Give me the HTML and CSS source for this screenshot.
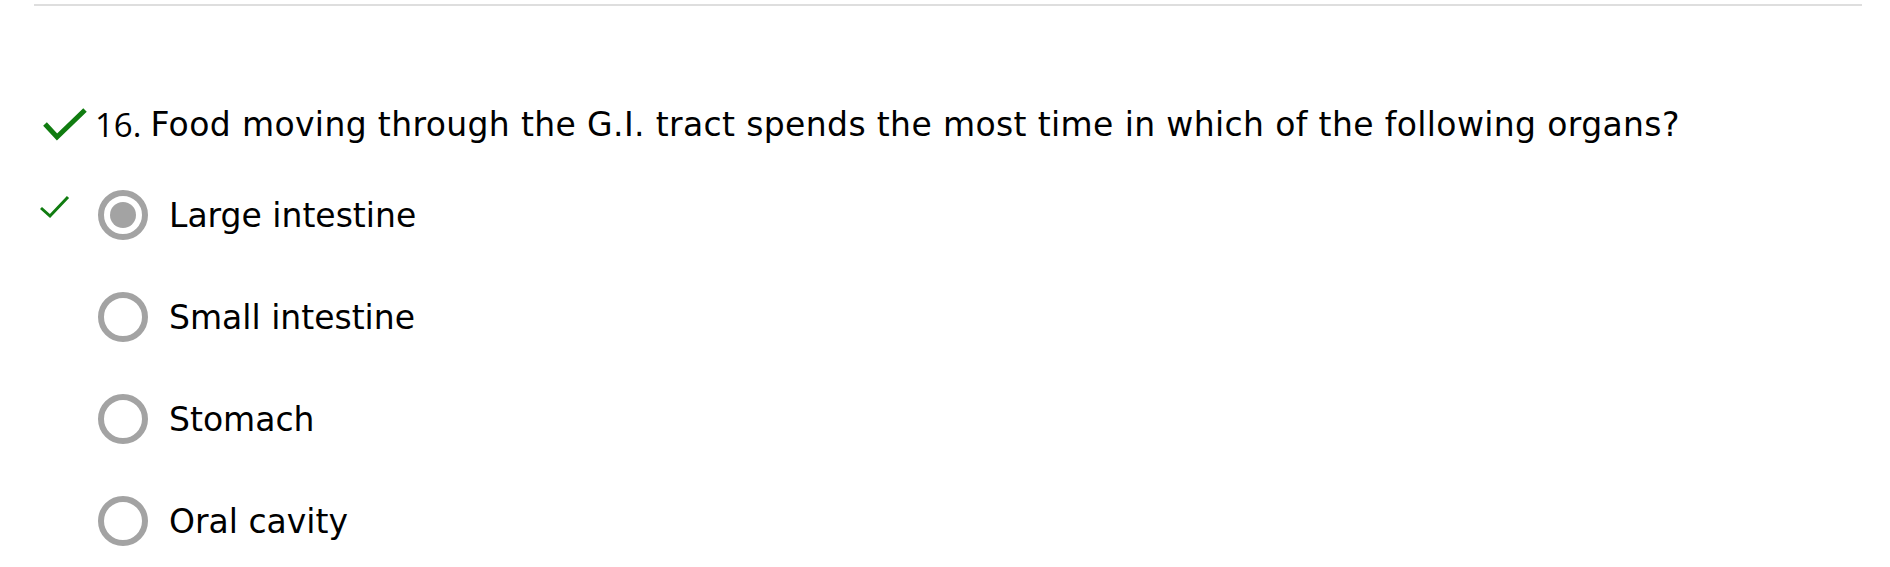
FILE: index.html
```html
<!DOCTYPE html>
<html>
<head>
<meta charset="utf-8">
<link rel="stylesheet" href="styles.css">
</head>
<body>
<div class="page">
  <div class="rule"></div>
  <div class="question">
    <svg class="big-check" width="46" height="34" viewBox="0 0 46 34"><polyline points="3,17 15,30 43,3" fill="none" stroke="#107c10" stroke-width="5"/></svg>
    <span class="num">16.</span>
    <span class="qtext">Food moving through the G.I. tract spends the most time in which of the following organs?</span>
  </div>
  <div class="options">
    <div class="option">
      <span class="mark"><svg width="30" height="24" viewBox="0 0 30 24"><polyline points="1,13 10,21 28,2" fill="none" stroke="#107c10" stroke-width="3"/></svg></span>
      <span class="radio checked"></span>
      <span class="label">Large intestine</span>
    </div>
    <div class="option">
      <span class="mark"></span>
      <span class="radio"></span>
      <span class="label">Small intestine</span>
    </div>
    <div class="option">
      <span class="mark"></span>
      <span class="radio"></span>
      <span class="label">Stomach</span>
    </div>
    <div class="option">
      <span class="mark"></span>
      <span class="radio"></span>
      <span class="label">Oral cavity</span>
    </div>
  </div>
</div>
</body>
</html>
```

FILE: styles.css
```css
html, body {
  margin: 0;
  padding: 0;
  background: #fff;
}
.page {
  padding: 4px 28px 0 34px;
  font-family: "DejaVu Sans", Verdana, sans-serif;
  color: #000;
}
.rule {
  height: 2px;
  background: #dedede;
}
.question {
  display: flex;
  align-items: center;
  height: 50px;
  margin-top: 93px;
  font-size: 33px;
}
.big-check {
  margin-left: 8px;
  margin-right: 7px;
  flex: none;
}
.num {
  font-family: "Open Sans", "Noto Sans", sans-serif;
  font-size: 33px;
  margin-right: 9px;
}
.qtext {
  white-space: nowrap;
  letter-spacing: 0.37px;
}
.options {
  margin-top: 15px;
}
.option {
  display: flex;
  align-items: center;
  height: 102px;
}
.mark {
  width: 30px;
  height: 24px;
  margin-left: 6px;
  margin-right: 28px;
  margin-top: -16px;
  flex: none;
}
.mark svg {
  display: block;
}
.radio {
  width: 50px;
  height: 50px;
  box-sizing: border-box;
  border: 6px solid #a3a3a3;
  border-radius: 50%;
  display: flex;
  align-items: center;
  justify-content: center;
  flex: none;
}
.radio.checked::after {
  content: "";
  width: 26px;
  height: 26px;
  border-radius: 50%;
  background: #a3a3a3;
}
.label {
  font-size: 33px;
  margin-left: 21px;
  white-space: nowrap;
}
```
